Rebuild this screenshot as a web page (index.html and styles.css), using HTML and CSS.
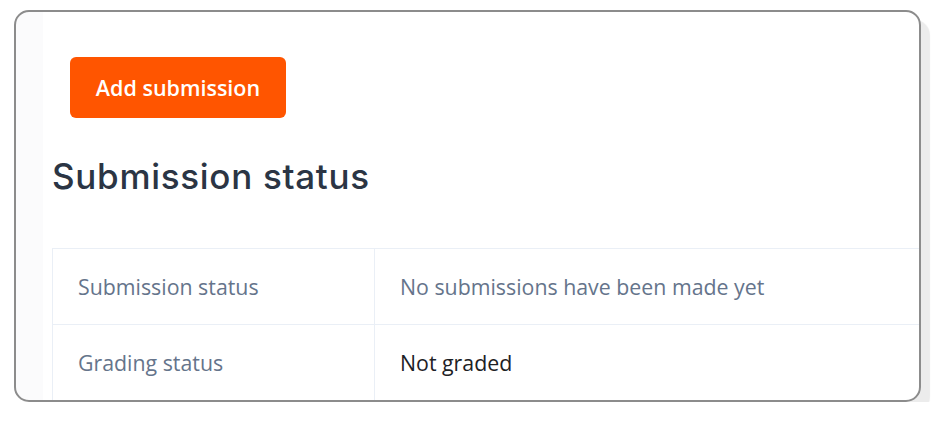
FILE: index.html
```html
<!DOCTYPE html>
<html lang="en">
<head>
    <meta charset="UTF-8">
    <meta name="viewport" content="width=device-width, initial-scale=1.0">
    <title>Submission status</title>
    <link rel="stylesheet" href="styles.css">
</head>
<body>
    <div class="card">
        <div class="actions">
            <button class="add-btn">Add submission</button>
        </div>

        <h2 class="section-title">Submission status</h2>

        <table class="status-table">
            <tr>
                <th>Submission status</th>
                <td class="muted">No submissions have been made yet</td>
            </tr>
            <tr>
                <th>Grading status</th>
                <td>Not graded</td>
            </tr>
        </table>
    </div>
</body>
</html>
```

FILE: styles.css
```css
body {
    margin: 0;
    background: #fff;
    font-family: 'Open Sans', sans-serif;
    color: #1d2125;
}

.card {
    margin: 10px 0 0 14px;
    width: 907px;
    height: 392px;
    border: 2px solid #8c8c8c;
    border-radius: 15px;
    background: linear-gradient(to right, #fbfbfc 27px, #fff 27px); /* faint strip on the left */
    box-shadow: 9px 10px 1px #ececec;
    padding: 0 0 0 36px;
    overflow: hidden;
    box-sizing: border-box;
}

.actions {
    padding: 45px 0 0 18px;
}

.add-btn {
    display: block;
    width: 216px;
    height: 61px;
    background-color: #ff5500;
    color: #fff;
    border: none;
    border-radius: 6px;
    font-family: 'Open Sans', sans-serif;
    font-size: 21.5px;
    font-weight: 600;
    cursor: pointer;
}

.section-title {
    margin: 36px 0 0;
    font-family: 'Inter', sans-serif;
    font-size: 35px;
    font-weight: 500;
    letter-spacing: 0.7px;
    line-height: 44px;
    color: #2b3544;
}

.status-table {
    margin-top: 50px;
    width: 1000px;
    border-collapse: collapse;
    font-size: 21.33px;
}

.status-table th,
.status-table td {
    height: 75px;
    padding: 0 25px;
    border: 1px solid #eaeff6;
    text-align: left;
    font-weight: 400;
}

.status-table th {
    width: 271px;
    color: #65748b;
}

.status-table td {
    color: #1d2125;
}

.status-table td.muted {
    color: #65748b;
}
```
